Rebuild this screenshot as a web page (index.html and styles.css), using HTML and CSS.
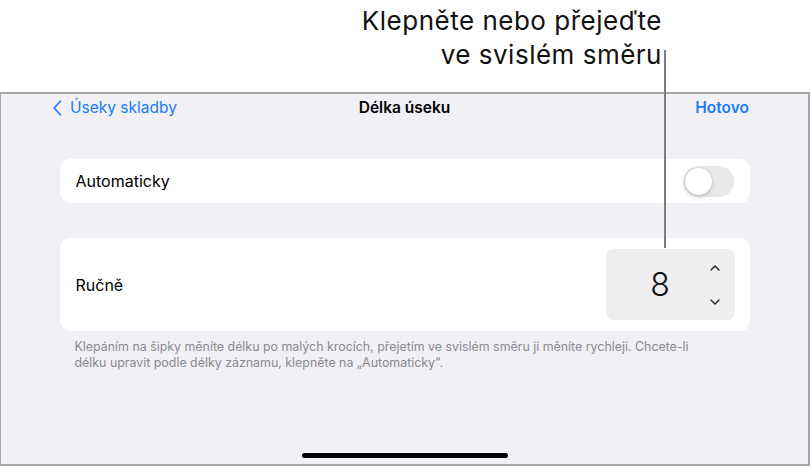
FILE: index.html
```html
<!DOCTYPE html>
<html lang="cs">
<head>
  <meta charset="UTF-8">
  <meta name="viewport" content="width=device-width, initial-scale=1.0">
  <title>Délka úseku</title>
  <link rel="stylesheet" href="styles.css">
</head>
<body>
  <div class="page">
    <!-- Callout above the screen -->
    <div class="callout">
      <p class="callout-text">Klepněte nebo přejeďte<br>ve svislém směru</p>
    </div>
    <div class="callout-line"></div>

    <!-- Device screen -->
    <div class="screen">
      <div class="nav">
        <a class="nav-back">
          <svg width="9" height="16" viewBox="0 0 9 16"><path d="M7.5 1 L1.2 8 L7.5 15" fill="none" stroke="#1a7cf5" stroke-width="1.6" stroke-linecap="round" stroke-linejoin="round"/></svg>
          <span>Úseky skladby</span>
        </a>
        <div class="nav-title">Délka úseku</div>
        <a class="nav-done">Hotovo</a>
      </div>

      <div class="card card-auto">
        <span class="label">Automaticky</span>
        <div class="toggle"><div class="knob"></div></div>
      </div>

      <div class="card card-manual">
        <span class="label">Ručně</span>
        <div class="stepper">
          <span class="stepper-value">8</span>
          <div class="stepper-arrows">
            <svg width="10" height="6" viewBox="0 0 10 6"><path d="M1 5 L5 1 L9 5" fill="none" stroke="#222" stroke-width="1.4" stroke-linecap="round" stroke-linejoin="round"/></svg>
            <svg width="10" height="6" viewBox="0 0 10 6"><path d="M1 1 L5 5 L9 1" fill="none" stroke="#222" stroke-width="1.4" stroke-linecap="round" stroke-linejoin="round"/></svg>
          </div>
        </div>
      </div>

      <p class="footnote">Klepáním na šipky měníte délku po malých krocích, přejetím ve svislém směru ji měníte rychleji. Chcete-li délku upravit podle délky záznamu, klepněte na „Automaticky“.</p>

      <div class="home-bar"></div>
    </div>
  </div>
</body>
</html>
```
FILE: styles.css
```css
/* General Styles */
body {
  margin: 0;
  padding: 0;
  background: #fff;
  font-family: Inter, 'Noto Sans', sans-serif;
  color: #000;
}

.page {
  position: relative;
  width: 811px;
  height: 468px;
  overflow: hidden;
}

/* Callout */
.callout {
  height: 92px;
  padding-right: 149px;
  text-align: right;
  box-sizing: border-box;
}

.callout-text {
  margin: 0;
  padding-top: 4px;
  font-family: Inter, sans-serif;
  font-size: 26px;
  line-height: 34px;
  letter-spacing: 0.5px;
  color: #111;
}

.callout-line {
  position: absolute;
  left: 664px;
  top: 50px;
  width: 2px;
  height: 198px;
  background: #7d7d7d;
  z-index: 2;
}

/* Screen */
.screen {
  width: 810px;
  height: 374px;
  box-sizing: border-box;
  border: 2px solid #a6a6a8;
  border-left-width: 1px;
  background: #f1f0f5;
  display: flex;
  flex-direction: column;
  align-items: center;
}

.nav {
  align-self: stretch;
  height: 27px;
  padding: 0 59px 0 52px;
  display: flex;
  align-items: center;
  justify-content: space-between;
  position: relative;
  font-size: 15.5px;
}

.nav-back {
  display: flex;
  align-items: center;
  gap: 8px;
  color: #1a7cf5;
}

.nav-title {
  position: absolute;
  left: 0;
  right: 0;
  text-align: center;
  font-weight: 600;
  font-size: 15.5px;
  pointer-events: none;
}

.nav-done {
  color: #1a7cf5;
  font-weight: 600;
}

.card {
  width: 690px;
  box-sizing: border-box;
  background: #fff;
  border-radius: 10px;
  display: flex;
  align-items: center;
  justify-content: space-between;
  padding: 0 15px 0 16px;
}

.label {
  font-size: 16px;
}

.card-auto {
  margin-top: 38px;
  height: 44px;
  padding-right: 16px;
}

.toggle {
  width: 51px;
  height: 31px;
  border-radius: 16px;
  background: #e9e9eb;
  position: relative;
}

.knob {
  position: absolute;
  left: 2px;
  top: 2px;
  width: 27px;
  height: 27px;
  border-radius: 50%;
  background: #fff;
  box-shadow: 0 2px 5px rgba(0, 0, 0, 0.18), 0 0 0 0.5px rgba(0, 0, 0, 0.06);
}

.card-manual {
  margin-top: 35px;
  height: 93px;
}

.stepper {
  width: 129px;
  height: 71px;
  box-sizing: border-box;
  border-radius: 8px;
  background: #eeeef0;
  display: grid;
  grid-template-columns: 1fr 28px;
  padding: 0 6px 0 14px;
  align-items: center;
}

.stepper-value {
  text-align: center;
  font-size: 32px;
  font-weight: 300;
  color: #111;
}

.stepper-arrows {
  height: 71px;
  display: flex;
  flex-direction: column;
  align-items: center;
  justify-content: space-between;
  padding: 16px 0 15px;
  box-sizing: border-box;
}

.footnote {
  width: 690px;
  box-sizing: border-box;
  margin: 8px 0 0;
  padding: 0 44px 0 15px;
  font-size: 12.4px;
  line-height: 16px;
  color: #8a8a8e;
}

.home-bar {
  margin-top: auto;
  margin-bottom: 6px;
  width: 206px;
  height: 5px;
  border-radius: 3px;
  background: #000;
}
```
